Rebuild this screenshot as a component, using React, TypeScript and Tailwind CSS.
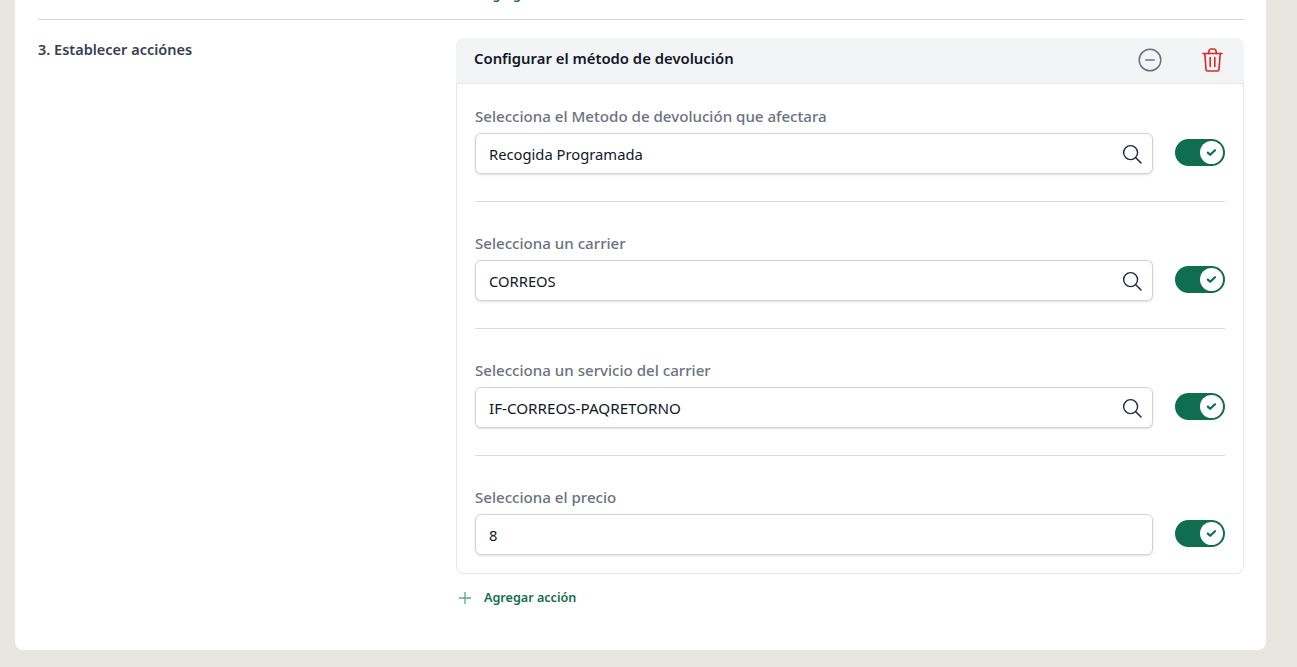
import React from "react";

const font = { fontFamily: '"Noto Sans", "Open Sans", sans-serif' };

function Toggle() {
  return (
    <div className="-mt-[2px] flex h-[27px] w-[50px] shrink-0 items-center justify-end rounded-full bg-[#0e6e4f] pr-[2px]">
      <div className="flex h-[23px] w-[23px] items-center justify-center rounded-full bg-white">
        <svg width="11" height="9" viewBox="0 0 11 9" fill="none">
          <path d="M1.8 4.6 L4.2 6.8 L9 2.2" stroke="#0e6e4f" strokeWidth="2.2" strokeLinecap="round" strokeLinejoin="round" />
        </svg>
      </div>
    </div>
  );
}

function Search() {
  return (
    <svg width="22" height="22" viewBox="0 0 22 22" fill="none" className="shrink-0">
      <circle cx="9.6" cy="9.6" r="7" stroke="#1f2937" strokeWidth="1.4" />
      <path d="M14.8 14.8 L20 20" stroke="#1f2937" strokeWidth="1.5" strokeLinecap="round" />
    </svg>
  );
}

function Field({ label, value, search, first, last, wide }: { label: string; value: string; search?: boolean; first?: boolean; last?: boolean; wide?: boolean }) {
  const pad = last ? "pt-[31px] pb-[18px]" : first ? "border-b border-[#d9dbe0] pt-[22px] pb-[27px]" : "border-b border-[#d9dbe0] pt-[31px] pb-[27px]";
  return (
    <div className={pad}>
      <div className="h-[20px] text-[15.1px] leading-[20px] font-medium text-[#6b7280]">{label}</div>
      <div className="mt-[7px] flex items-center gap-[22px]">
        <div className="flex h-[41px] flex-1 items-center justify-between rounded-md border border-[#d1d5db] bg-white pr-[9px] pl-[13px] shadow-sm">
          <span className={wide ? "pt-px text-[15.2px] text-[#111827]" : "pt-px text-[14.75px] text-[#111827]"}>{value}</span>
          {search && <Search />}
        </div>
        <Toggle />
      </div>
    </div>
  );
}

function Add({ label, top }: { label: string; top?: boolean }) {
  return (
    <div className="flex h-[20px] items-center">
      <svg width="16" height="16" viewBox="0 0 16 16" fill="none" className={top ? "mr-[11px] ml-px -mt-[6px]" : "mr-[11px] ml-px"}>
        <path d="M8 2 V14 M2 8 H14" stroke="#5fa58c" strokeWidth="1.3" />
      </svg>
      <span className="text-[12.6px] leading-[20px] font-semibold text-[#0e6e4f]">{label}</span>
    </div>
  );
}

export default function App() {
  return (
    <div className="h-[667px] overflow-hidden bg-[#e9e6df] px-[15px] pr-[31px]" style={font}>
      <div className="-mt-[15px] h-[665px] rounded-lg bg-white px-[23px] pr-[22px]">
        <div className="ml-[418px] h-[20px]">
          <Add top label="Agregar condición" />
        </div>
        <div className="mt-[14px] border-t border-[#d4d4d4] pt-[18px]">
          <div className="flex">
            <div className="-mt-[1px] w-[418px] text-[14.5px] leading-[24px] font-semibold text-[#374151]">3. Establecer acciónes</div>
            <div className="flex-1">
              <div className="flex h-[46px] items-center justify-between rounded-t-lg border-b border-[#e5e7eb] bg-[#f3f4f6] pr-[21px] pl-[18px]">
                <span className="-mt-[4px] text-[14.85px] font-semibold text-[#111827]">Configurar el método de devolución</span>
                <div className="-mt-px flex items-center gap-[40px]">
                  <svg width="24" height="24" viewBox="0 0 24 24" fill="none">
                    <circle cx="12" cy="12" r="10.8" stroke="#6b7280" strokeWidth="1.5" />
                    <path d="M8 12 H16" stroke="#6b7280" strokeWidth="1.7" strokeLinecap="round" />
                  </svg>
                  <svg width="21" height="24" viewBox="0 0 21 24" fill="none" stroke="#dc2626" strokeWidth="1.6" strokeLinecap="round" strokeLinejoin="round">
                    <path d="M1 5.5 H20" />
                    <path d="M6.5 5.5 L7 2.8 C7.1 1.8 7.7 1 8.8 1 H12.2 C13.3 1 13.9 1.8 14 2.8 L14.5 5.5" />
                    <path d="M2.8 5.5 L4 21.5 C4.1 22.4 4.7 23 5.6 23 H15.4 C16.3 23 16.9 22.4 17 21.5 L18.2 5.5" />
                    <path d="M8.2 9.5 V18.5 M12.8 9.5 V18.5" />
                  </svg>
                </div>
              </div>
              <div className="rounded-b-lg border-x border-b border-[#e5e7eb] px-[18px]">
                <Field first label="Selecciona el Metodo de devolución que afectara" value="Recogida Programada" search />
                <Field label="Selecciona un carrier" value="CORREOS" search />
                <Field wide label="Selecciona un servicio del carrier" value="IF-CORREOS-PAQRETORNO" search />
                <Field last label="Selecciona el precio" value="8" />
              </div>
              <div className="mt-[14px]">
                <Add label="Agregar acción" />
              </div>
            </div>
          </div>
        </div>
      </div>
    </div>
  );
}
